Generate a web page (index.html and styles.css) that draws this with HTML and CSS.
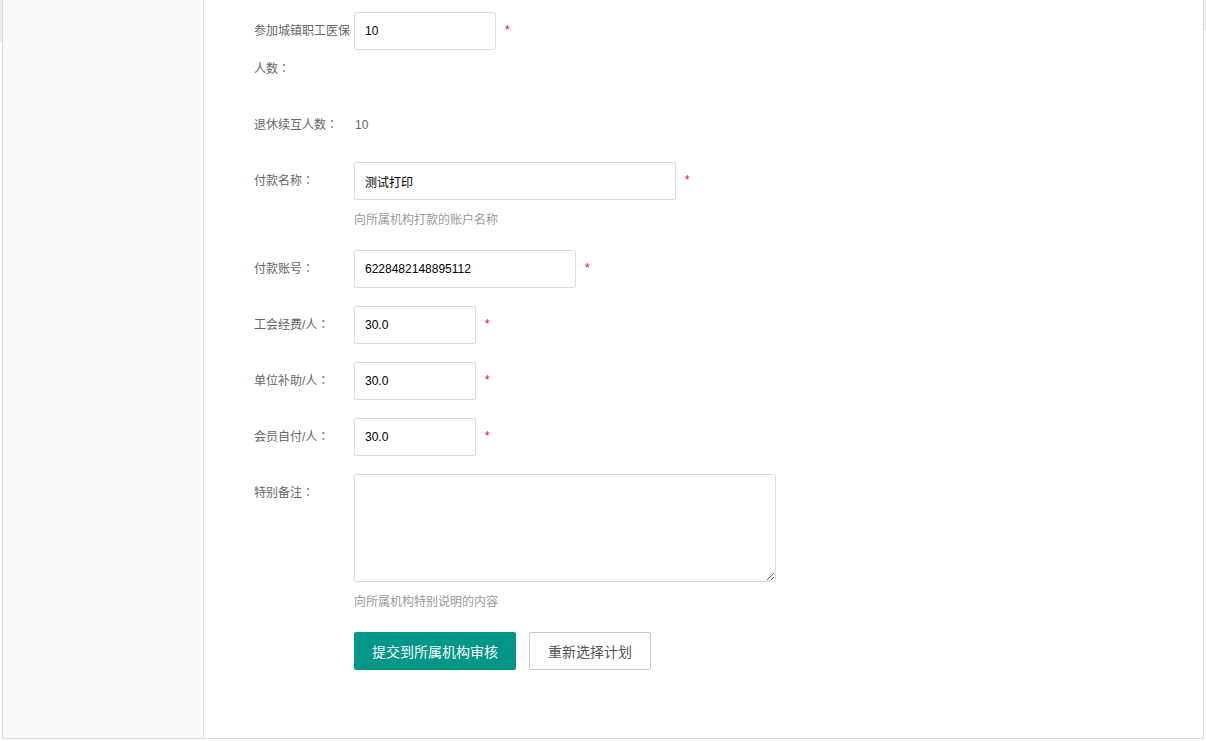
FILE: index.html
```html
<!DOCTYPE html>
<html lang="zh-CN">
<head>
<meta charset="utf-8">
<title>表单</title>
<link rel="stylesheet" href="styles.css">
</head>
<body>
<div class="edge edge-left"></div>
<div class="edge edge-right"></div>
<div class="frame">
  <aside class="sidebar"></aside>
  <main class="content">
    <form class="form">
      <div class="row">
        <label class="label">参加城镇职工医保人数<span class="colon" lang="zh-TW">：</span></label>
        <div class="field">
          <div class="inline">
            <input class="input w140" type="text" value="10">
            <span class="req">*</span>
          </div>
        </div>
      </div>
      <div class="row">
        <label class="label">退休续互人数<span class="colon" lang="zh-TW">：</span></label>
        <div class="field"><span class="value">10</span></div>
      </div>
      <div class="row">
        <label class="label">付款名称<span class="colon" lang="zh-TW">：</span></label>
        <div class="field">
          <div class="inline">
            <input class="input w320" type="text" value="测试打印">
            <span class="req">*</span>
          </div>
          <div class="help">向所属机构打款的账户名称</div>
        </div>
      </div>
      <div class="row">
        <label class="label">付款账号<span class="colon" lang="zh-TW">：</span></label>
        <div class="field">
          <div class="inline">
            <input class="input w220" type="text" value="6228482148895112">
            <span class="req">*</span>
          </div>
        </div>
      </div>
      <div class="row">
        <label class="label">工会经费/人<span class="colon" lang="zh-TW">：</span></label>
        <div class="field">
          <div class="inline">
            <input class="input w120" type="text" value="30.0">
            <span class="req">*</span>
          </div>
        </div>
      </div>
      <div class="row">
        <label class="label">单位补助/人<span class="colon" lang="zh-TW">：</span></label>
        <div class="field">
          <div class="inline">
            <input class="input w120" type="text" value="30.0">
            <span class="req">*</span>
          </div>
        </div>
      </div>
      <div class="row">
        <label class="label">会员自付/人<span class="colon" lang="zh-TW">：</span></label>
        <div class="field">
          <div class="inline">
            <input class="input w120" type="text" value="30.0">
            <span class="req">*</span>
          </div>
        </div>
      </div>
      <div class="row">
        <label class="label">特别备注<span class="colon" lang="zh-TW">：</span></label>
        <div class="field">
          <textarea class="textarea"></textarea>
          <div class="help">向所属机构特别说明的内容</div>
        </div>
      </div>
      <div class="row">
        <div class="label"></div>
        <div class="buttons">
          <button type="button" class="btn btn-primary">提交到所属机构审核</button>
          <button type="button" class="btn btn-default">重新选择计划</button>
        </div>
      </div>
    </form>
  </main>
</div>
</body>
</html>
```

FILE: styles.css
```css
* {
  box-sizing: border-box;
}

html, body {
  margin: 0;
  padding: 0;
  background: #ffffff;
  font-family: "Liberation Sans", "Noto Sans CJK SC", sans-serif;
  font-size: 12px;
  color: #666;
}

body {
  position: relative;
  width: 1206px;
  height: 741px;
  overflow: hidden;
}

.edge {
  position: absolute;
  top: 0;
  background: #eeeeee;
}

.edge-left {
  left: 0;
  width: 2px;
  height: 42px;
}

.edge-right {
  right: 0;
  width: 2px;
  height: 30px;
}

.frame {
  margin-left: 2px;
  width: 1202px;
  height: 739px;
  border: 1px solid #dddddd;
  border-top: none;
  display: flex;
}

.sidebar {
  width: 201px;
  flex-shrink: 0;
  background: #fafafa;
  border-right: 1px solid #dddddd;
}

.content {
  flex: 1;
  background: #ffffff;
}

.form {
  padding: 12px 0 0 50px;
  display: flex;
  flex-direction: column;
  gap: 18px;
}

.row {
  display: flex;
  align-items: flex-start;
}

.label {
  width: 100px;
  flex-shrink: 0;
  line-height: 38px;
  color: #666;
  font-size: 12px;
}

.colon {
  font-family: "Noto Sans CJK TC", "Noto Sans CJK JP", sans-serif;
  line-height: 1;
}

.field {
  display: flex;
  flex-direction: column;
}

.inline {
  display: flex;
  align-items: flex-start;
}

.value {
  line-height: 38px;
  color: #666;
  padding-left: 1px;
}

.input {
  height: 38px;
  border: 1px solid #dddddd;
  border-radius: 2px;
  padding: 0 10px;
  font-family: "Liberation Sans", "Noto Sans CJK SC", sans-serif;
  font-size: 12px;
  color: #000;
  background: #fff;
  outline: none;
}

.w140 { width: 142px; }
.w320 { width: 322px; }
.w220 { width: 222px; }
.w120 { width: 122px; }

.req {
  margin-left: 9px;
  color: #ff0000;
  font-size: 12px;
  line-height: 36px;
}

.textarea {
  width: 422px;
  height: 108px;
  border: 1px solid #dddddd;
  border-radius: 2px;
  padding: 6px 10px;
  font-family: "Liberation Sans", "Noto Sans CJK SC", sans-serif;
  font-size: 12px;
  outline: none;
  display: block;
}

.help {
  margin-top: 8px;
  line-height: 24px;
  color: #999;
  font-size: 12px;
}

.buttons {
  display: flex;
  gap: 13px;
}

.btn {
  height: 38px;
  padding: 0 18px;
  font-family: "Liberation Sans", "Noto Sans CJK SC", sans-serif;
  font-size: 14px;
  border-radius: 2px;
  cursor: pointer;
  white-space: nowrap;
}

.btn-primary {
  width: 162px;
  background: #009688;
  color: #fff;
  border: none;
}

.btn-default {
  width: 122px;
  background: #fff;
  color: #555;
  border: 1px solid #c9c9c9;
}
```
